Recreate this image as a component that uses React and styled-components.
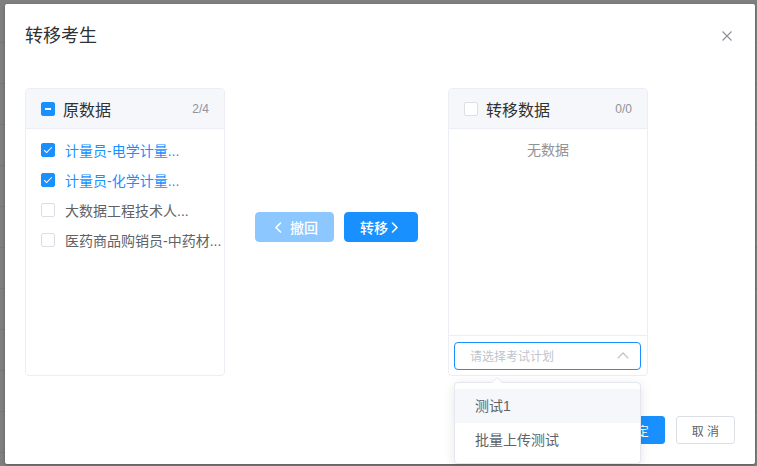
import React from "react";
import styled, { createGlobalStyle, css } from "styled-components";

const GlobalStyle = createGlobalStyle`
  html, body {
    margin: 0;
    padding: 0;
  }
  body {
    background-color: #7f7f7f;
    font-family: "Helvetica Neue", Helvetica, "Liberation Sans", "Noto Sans CJK SC", sans-serif;
    -webkit-font-smoothing: antialiased;
  }
  * { box-sizing: border-box; }
`;

const PRIMARY = "#1890ff";

const Page = styled.div`
  width: 757px;
  height: 466px;
  padding: 4px 0 0 5px;
  overflow: hidden;
  background: repeating-linear-gradient(
    to bottom,
    #7f7f7f 0px,
    #7f7f7f 40px,
    #777777 40px,
    #777777 41px
  );
  background-position: 0 2px;
`;

const Dialog = styled.div`
  width: 750px;
  background: #fff;
  border-radius: 2px;
  box-shadow: 0 1px 3px rgba(0, 0, 0, 0.3);
`;

const DialogHeader = styled.div`
  display: flex;
  align-items: center;
  justify-content: space-between;
  padding: 20px 20px 10px;
`;

const Title = styled.span`
  font-size: 18px;
  line-height: 24px;
  color: #303133;
`;

const CloseButton = styled.button`
  width: 16px;
  height: 16px;
  padding: 0;
  border: 0;
  background: transparent;
  display: flex;
  align-items: center;
  justify-content: center;
  cursor: pointer;
`;

const DialogBody = styled.div`
  padding: 30px 20px;
`;

const Transfer = styled.div`
  display: flex;
  align-items: center;
`;

const Panel = styled.div`
  width: 200px;
  height: 288px;
  flex: none;
  border: 1px solid #ebeef5;
  border-radius: 4px;
  display: flex;
  flex-direction: column;
  background: #fff;
`;

const PanelHeader = styled.div`
  height: 40px;
  flex: none;
  display: flex;
  align-items: center;
  padding: 0 15px;
  background: #f5f7fa;
  border-bottom: 1px solid #ebeef5;
  border-radius: 4px 4px 0 0;
`;

const HeaderLabel = styled.span`
  flex: 1;
  margin-left: 8px;
  font-size: 16px;
  color: #303133;
`;

const Count = styled.span`
  font-size: 12px;
  color: #909399;
`;

const PanelList = styled.div`
  flex: 1;
  padding: 6px 0;
  overflow: hidden;
`;

const Item = styled.div`
  height: 30px;
  display: flex;
  align-items: center;
  padding-left: 15px;
`;

const ItemLabel = styled.span`
  margin-left: 10px;
  font-size: 14px;
  white-space: nowrap;
  overflow: hidden;
  text-overflow: ellipsis;
  color: ${(p) => (p.$checked ? PRIMARY : "#606266")};
`;

const Empty = styled.div`
  height: 30px;
  line-height: 30px;
  text-align: center;
  font-size: 14px;
  color: #909399;
`;

const Checkbox = styled.span`
  position: relative;
  flex: none;
  width: 14px;
  height: 14px;
  border-radius: 2px;
  border: 1px solid #dcdfe6;
  background: #fff;
  ${(p) =>
    (p.$checked || p.$indeterminate) &&
    css`
      border-color: ${PRIMARY};
      background: ${PRIMARY};
    `}
  ${(p) =>
    p.$checked &&
    css`
      &::after {
        content: "";
        position: absolute;
        left: 4px;
        top: 1px;
        width: 3px;
        height: 7px;
        border: 1px solid #fff;
        border-left: 0;
        border-top: 0;
        transform: rotate(45deg);
      }
    `}
  ${(p) =>
    p.$indeterminate &&
    css`
      &::before {
        content: "";
        position: absolute;
        left: 3px;
        right: 3px;
        top: 5px;
        height: 2px;
        background: #fff;
      }
    `}
`;

const ButtonsColumn = styled.div`
  display: flex;
  align-items: center;
  gap: 10px;
  padding: 0 30px;
  margin-bottom: 10px;
`;

const TransferButton = styled.button`
  height: 30px;
  padding: 0 15px;
  display: flex;
  align-items: center;
  gap: ${(p) => p.$gap}px;
  border: 1px solid ${(p) => (p.disabled ? "#8cc8ff" : PRIMARY)};
  background: ${(p) => (p.disabled ? "#8cc8ff" : PRIMARY)};
  color: #fff;
  border-radius: 4px;
  font-family: inherit;
  font-size: 14px;
  font-weight: 500;
  cursor: ${(p) => (p.disabled ? "not-allowed" : "pointer")};
`;

const IconBox = styled.span`
  width: 14px;
  height: 14px;
  display: flex;
  align-items: center;
  justify-content: center;
`;

const PanelFooter = styled.div`
  height: 40px;
  flex: none;
  border-top: 1px solid #ebeef5;
  display: flex;
  align-items: center;
  padding: 0 6px 0 5px;
`;

const SelectWrap = styled.div`
  position: relative;
  width: 100%;
`;

const SelectBox = styled.div`
  height: 28px;
  border: 1px solid ${PRIMARY};
  border-radius: 4px;
  display: flex;
  align-items: center;
  padding: 0 11px 0 15px;
  background: #fff;
`;

const Placeholder = styled.span`
  flex: 1;
  font-size: 12px;
  color: #c0c4cc;
`;

const Dropdown = styled.div`
  position: absolute;
  top: calc(100% + 12px);
  left: 0;
  width: 100%;
  background: #fff;
  border: 1px solid #e4e7ed;
  border-radius: 4px;
  box-shadow: 0 2px 12px 0 rgba(0, 0, 0, 0.1);
  padding: 6px 0;
  z-index: 10;

  &::before,
  &::after {
    content: "";
    position: absolute;
    left: 36px;
    width: 0;
    height: 0;
    border: 6px solid transparent;
    border-top-width: 0;
  }
  &::before {
    top: -6px;
    border-bottom-color: #e4e7ed;
  }
  &::after {
    top: -5px;
    border-bottom-color: #fff;
  }
`;

const Option = styled.div`
  height: 34px;
  line-height: 34px;
  padding: 0 20px;
  font-size: 14px;
  color: #606266;
  background: ${(p) => (p.$hover ? "#f5f7fa" : "#fff")};
`;

const DialogFooter = styled.div`
  display: flex;
  justify-content: flex-end;
  gap: 11px;
  padding: 10px 20px 20px;
`;

const FooterButton = styled.button`
  height: 28px;
  padding: 0 15px;
  border-radius: 3px;
  font-family: inherit;
  font-size: 12px;
  white-space: pre;
  border: 1px solid ${(p) => (p.$primary ? PRIMARY : "#dcdfe6")};
  background: ${(p) => (p.$primary ? PRIMARY : "#fff")};
  color: ${(p) => (p.$primary ? "#fff" : "#606266")};
  cursor: pointer;
`;

const Chevron = ({ dir }) => (
  <svg width="8" height="11" viewBox="0 0 8 11" fill="none">
    <path
      d={dir === "left" ? "M6.5 1L2 5.5L6.5 10" : "M1.5 1L6 5.5L1.5 10"}
      stroke="#fff"
      strokeWidth="1.6"
      strokeLinecap="round"
      strokeLinejoin="round"
    />
  </svg>
);

const CloseIcon = () => (
  <svg width="10" height="10" viewBox="0 0 10 10">
    <path d="M0.5 0.5L9.5 9.5M9.5 0.5L0.5 9.5" stroke="#909399" strokeWidth="1.2" />
  </svg>
);

const ArrowUp = () => (
  <svg width="12" height="7" viewBox="0 0 12 7" fill="none">
    <path d="M0.8 6.2L6 1L11.2 6.2" stroke="#c0c4cc" strokeWidth="1.3" />
  </svg>
);

const sourceItems = [
  { label: "计量员-电学计量...", checked: true },
  { label: "计量员-化学计量...", checked: true },
  { label: "大数据工程技术人...", checked: false },
  { label: "医药商品购销员-中药材...", checked: false },
];

export default function App() {
  return (
    <>
      <GlobalStyle />
      <Page>
        <Dialog>
          <DialogHeader>
            <Title>转移考生</Title>
            <CloseButton aria-label="关闭">
              <CloseIcon />
            </CloseButton>
          </DialogHeader>
          <DialogBody>
            <Transfer>
              <Panel>
                <PanelHeader>
                  <Checkbox $indeterminate />
                  <HeaderLabel>原数据</HeaderLabel>
                  <Count>2/4</Count>
                </PanelHeader>
                <PanelList>
                  {sourceItems.map((it) => (
                    <Item key={it.label}>
                      <Checkbox $checked={it.checked} />
                      <ItemLabel $checked={it.checked}>{it.label}</ItemLabel>
                    </Item>
                  ))}
                </PanelList>
              </Panel>
              <ButtonsColumn>
                <TransferButton disabled $gap={5}>
                  <IconBox>
                    <Chevron dir="left" />
                  </IconBox>
                  <span>撤回</span>
                </TransferButton>
                <TransferButton $gap={0}>
                  <span>转移</span>
                  <IconBox>
                    <Chevron dir="right" />
                  </IconBox>
                </TransferButton>
              </ButtonsColumn>
              <Panel>
                <PanelHeader>
                  <Checkbox />
                  <HeaderLabel>转移数据</HeaderLabel>
                  <Count>0/0</Count>
                </PanelHeader>
                <PanelList>
                  <Empty>无数据</Empty>
                </PanelList>
                <PanelFooter>
                  <SelectWrap>
                    <SelectBox>
                      <Placeholder>请选择考试计划</Placeholder>
                      <ArrowUp />
                    </SelectBox>
                    <Dropdown>
                      <Option $hover>测试1</Option>
                      <Option>批量上传测试</Option>
                    </Dropdown>
                  </SelectWrap>
                </PanelFooter>
              </Panel>
            </Transfer>
          </DialogBody>
          <DialogFooter>
            <FooterButton $primary>确 定</FooterButton>
            <FooterButton>取 消</FooterButton>
          </DialogFooter>
        </Dialog>
      </Page>
    </>
  );
}
